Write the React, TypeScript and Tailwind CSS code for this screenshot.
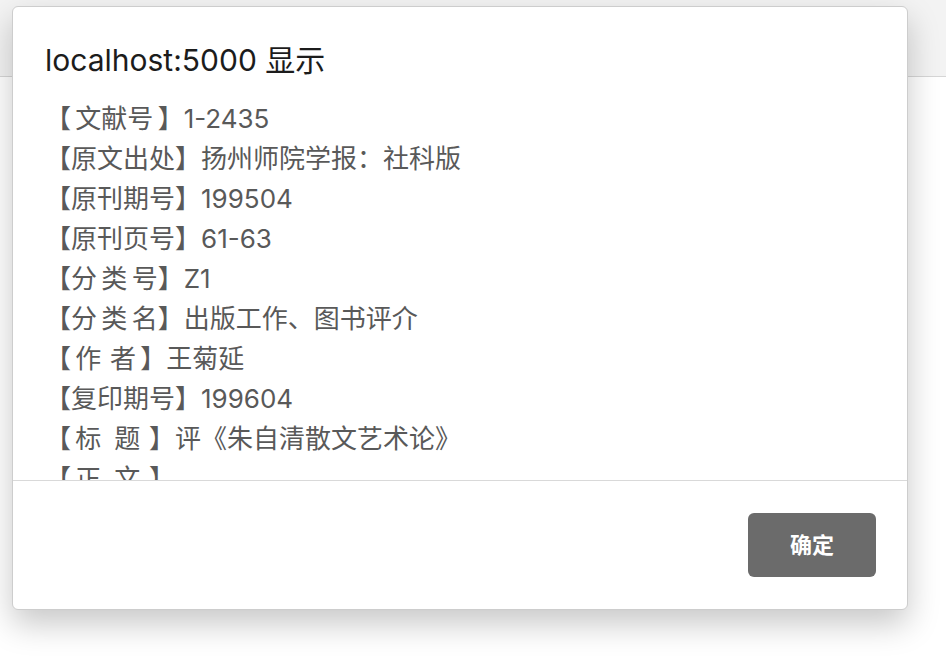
const lines: [string, string][] = [
  ['【\u2006文献号\u2006】', '1-2435'],
  ['【原文出处】', '扬州师院学报：社科版'],
  ['【原刊期号】', '199504'],
  ['【原刊页号】', '61-63'],
  ['【分\u2006类\u2006号】', 'Z1'],
  ['【分\u2006类\u2006名】', '出版工作、图书评介'],
  ['【\u2006作\u2006\u2006者\u2006】', '王菊延'],
  ['【复印期号】', '199604'],
  ['【\u2006标\u2006\u2006\u2006题\u2006\u2006】', '评《朱自清散文艺术论》'],
  ['【\u2006正\u2006\u2006\u2006文\u2006\u2006】', ''],
];

export default function App() {
  return (
    <div
      className="relative w-[946px] h-[660px] overflow-hidden bg-white"
      style={{ fontFamily: "Inter, 'Noto Sans CJK SC', sans-serif" }}
    >
      {/* page behind the alert */}
      <div className="h-[77px] bg-[#f3f3f3] border-b border-[#d6d6d6]" />

      {/* alert dialog */}
      <div className="absolute left-[12px] top-[6px] w-[896px] h-[604px] flex flex-col bg-white rounded-[6px] border border-[#cdcdcd] shadow-[0_14px_32px_rgba(0,0,0,0.22)]">
        <div className="pt-[33px] px-[32px] text-[30px] leading-[40px] text-[#1c1c1c] whitespace-nowrap">
          localhost:5000 显示
        </div>

        <div className="flex-1 overflow-hidden pt-[19px] px-[32px]">
          {lines.map(([label, value]) => (
            <div
              key={label}
              className="text-[26px] leading-[40px] text-[#595959] whitespace-pre"
            >
              {label}
              {value}
            </div>
          ))}
        </div>

        <div className="border-t border-[#d9d9d9] flex justify-end items-center px-[31px] py-[32px]">
          <button className="w-[128px] h-[64px] rounded-[6px] bg-[#6b6b6b] text-white text-[22px] font-bold">
            确定
          </button>
        </div>
      </div>
    </div>
  );
}
